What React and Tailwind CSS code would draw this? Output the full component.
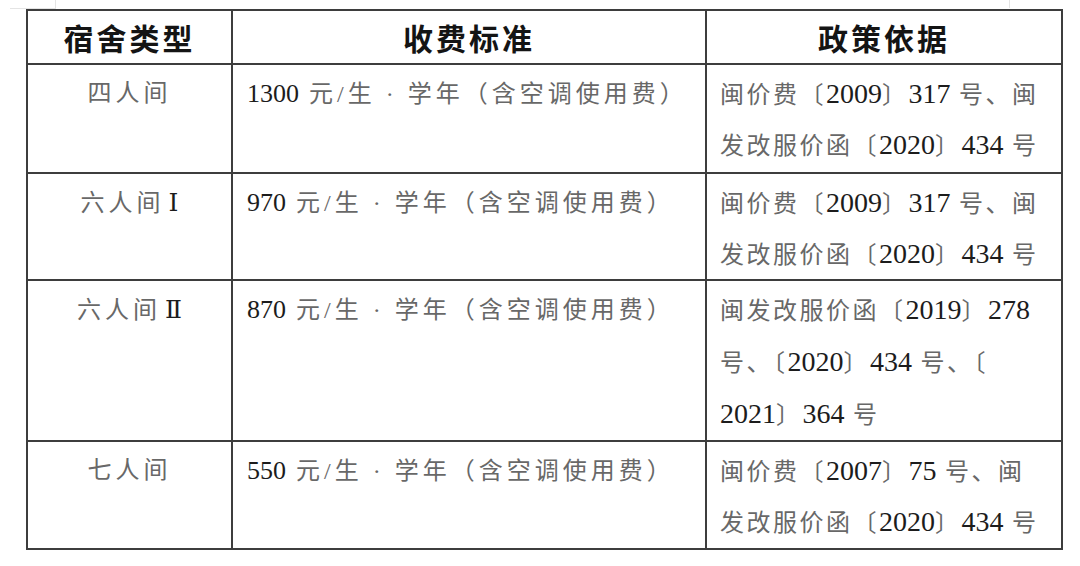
import React from "react";

const rows = [
  {
    type: "四人间",
    fee: "1300 元/生 · 学年（含空调使用费）",
    basis: ["闽价费〔2009〕317 号、闽", "发改服价函〔2020〕434 号"],
    h: "h-[109px]",
    lh: "h-[51px] leading-[51px]",
  },
  {
    type: "六人间Ⅰ",
    fee: "970 元/生 · 学年（含空调使用费）",
    basis: ["闽价费〔2009〕317 号、闽", "发改服价函〔2020〕434 号"],
    h: "h-[106px]",
    lh: "h-[51px] leading-[51px]",
  },
  {
    type: "六人间Ⅱ",
    fee: "870 元/生 · 学年（含空调使用费）",
    basis: ["闽发改服价函〔2019〕278", "号、〔2020〕434 号、〔", "2021〕364 号"],
    h: "h-[161px]",
    lh: "h-[52px] leading-[52px]",
  },
  {
    type: "七人间",
    fee: "550 元/生 · 学年（含空调使用费）",
    basis: ["闽价费〔2007〕75 号、闽", "发改服价函〔2020〕434 号"],
    h: "h-[108px]",
    lh: "h-[51px] leading-[51px]",
  },
];

// digits and roman numerals print darker and larger than the thin song-style chinese
const Mixed = ({ text, num }) =>
  text.split(/([0-9]+|[ⅠⅡ])/).map((part, i) =>
    /^[0-9]+$/.test(part) ? (
      <span key={i} className={`text-[#1c1c1c] tracking-normal ${num}`}>
        {part}
      </span>
    ) : /^[ⅠⅡ]$/.test(part) ? (
      <span
        key={i}
        className="text-[#1c1c1c] tracking-normal text-[25px] ml-[4px]"
        style={{ fontFamily: '"DejaVu Serif", "Liberation Serif", serif' }}
      >
        {part}
      </span>
    ) : (
      <span key={i}>{part}</span>
    )
  );

const cell = "border-2 border-[#3d3d3d] align-top p-0";
const body = "text-[24px] text-[#686868] pt-[3px] whitespace-nowrap";

export default function App() {
  return (
    <div
      className="relative w-[1080px] h-[566px] bg-white overflow-hidden pl-[26px] pt-[9px]"
      style={{ fontFamily: '"Liberation Serif", "Noto Sans CJK SC", serif' }}
    >
      {/* page corner marks */}
      <div className="absolute left-[10px] top-[8px] w-[46px] h-px bg-[#e4e4e4]" />
      <div className="absolute left-[55px] top-0 w-px h-[9px] bg-[#e4e4e4]" />
      <div className="absolute left-[1009px] top-0 w-px h-[8px] bg-[#e4e4e4]" />

      <table className="border-collapse border-2 border-[#3d3d3d] table-fixed w-[1035px]">
        <colgroup>
          <col className="w-[205px]" />
          <col className="w-[474px]" />
          <col className="w-[356px]" />
        </colgroup>
        <thead>
          <tr className="h-[54px]">
            {["宿舍类型", "收费标准", "政策依据"].map((t) => (
              <th
                key={t}
                className="border-2 border-[#3d3d3d] p-0 align-middle text-center text-[30px] font-bold text-[#141414] tracking-[3px] leading-none"
                style={{ fontFamily: '"Noto Sans CJK SC", sans-serif' }}
              >
                {t}
              </th>
            ))}
          </tr>
        </thead>
        <tbody>
          {rows.map((r) => (
            <tr key={r.type} className={r.h}>
              <td className={cell}>
                <div className={`${body} tracking-[4px] text-center`}>
                  <div className="h-[51px] leading-[51px]">
                    <Mixed text={r.type} num="text-[26px]" />
                  </div>
                </div>
              </td>
              <td className={cell}>
                <div className={`${body} tracking-[4px] pl-[14px]`}>
                  <div className="h-[51px] leading-[51px]">
                    <Mixed text={r.fee} num="text-[26px]" />
                  </div>
                </div>
              </td>
              <td className={cell}>
                <div className={`${body} tracking-[2.5px] pl-[13px]`}>
                  {r.basis.map((l) => (
                    <div key={l} className={r.lh}>
                      <Mixed text={l} num="text-[28px]" />
                    </div>
                  ))}
                </div>
              </td>
            </tr>
          ))}
        </tbody>
      </table>
    </div>
  );
}
